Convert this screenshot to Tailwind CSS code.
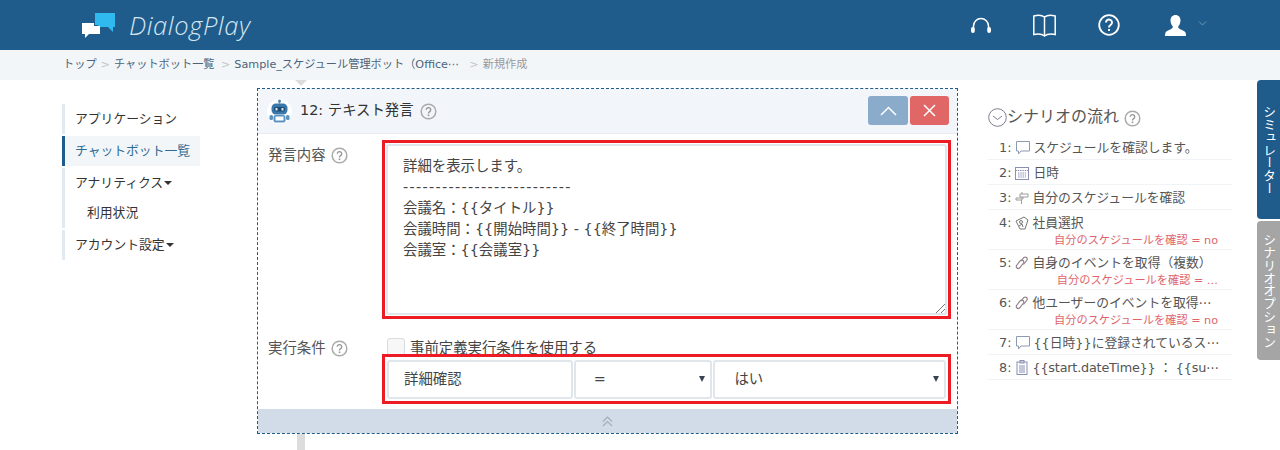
<!DOCTYPE html>
<html lang="ja">
<head>
<meta charset="utf-8">
<title>DialogPlay</title>
<script src="https://cdn.jsdelivr.net/npm/@tailwindcss/browser@4"></script>
</head>
<body class="h-[450px] overflow-hidden bg-white text-[14.4px] text-[#444] font-['DejaVu_Sans','Noto_Sans_CJK_JP',sans-serif]">

<!-- header -->
<header class="h-[50px] bg-[#1f5c8b] flex items-center text-white">
  <svg class="ml-[82px] mt-[2px]" width="33" height="26" viewBox="0 0 33 26">
    <path d="M13 0h20v14h-2v5l-5-5H16v-2h-3z" fill="#2fb9ee"/>
    <path d="M0 10h12v3h6v8H7l-4 4v-4H0z" fill="#fff"/>
  </svg>
  <span class="ml-[14px] text-[25.500px] italic font-light tracking-[0.6px] text-[#d5e6f2] font-['Open_Sans',sans-serif]">DialogPlay</span>
  <div class="ml-auto flex items-center">
    <svg class="mr-[42px]" width="20" height="16" viewBox="0 0 20 16" fill="none" stroke="#fff">
      <path d="M2.500 11V9a7.500 7.500 0 0 1 15 0v2" stroke-width="1.500"/>
      <rect x="0" y="10" width="3.800" height="6" rx="1.900" fill="#fff" stroke="none"/>
      <rect x="16.200" y="10" width="3.800" height="6" rx="1.900" fill="#fff" stroke="none"/>
    </svg>
    <svg class="mr-[42px]" width="23" height="23" viewBox="0 0 23 23" fill="none" stroke="#fff" stroke-width="1.500">
      <path d="M.8 2c4-1 8-1 10.700 1 2.700-2 6.700-2 10.700-1v18.500c-4-.8-8-.8-10.700 1.500-2.700-2.300-6.700-2.300-10.700-1.500z"/>
      <path d="M11.500 3v19"/>
    </svg>
    <svg class="mr-[45px]" width="22" height="22" viewBox="0 0 22 22" fill="none">
      <circle cx="11" cy="11" r="9.800" stroke="#fff" stroke-width="1.800"/>
      <path d="M8 8.500a3 3 0 1 1 4.600 2.500c-1 .7-1.600 1.200-1.600 2.500" stroke="#fff" stroke-width="2"/>
      <rect x="10" y="15" width="2" height="2" fill="#fff"/>
    </svg>
    <svg class="mr-[12px]" width="21" height="21" viewBox="0 0 21 21" fill="#fff">
      <path d="M10.500 0c3 0 5 2.300 5 5.500 0 2.500-1 4.500-2.200 5.800-.4 1.200.2 2.200 2 3 2.200 1 4.400 2 5.200 3.200.3.800.5 2 .5 3.500H0c0-1.500.2-2.700.5-3.500.8-1.200 3-2.200 5.200-3.200 1.800-.8 2.400-1.800 2-3C6.500 10 5.500 8 5.500 5.500c0-3.200 2-5.500 5-5.500z"/>
    </svg>
    <svg class="mr-[73px] mb-[4px]" width="9" height="5" viewBox="0 0 9 5" fill="none" stroke="#6f95b3"><path d="M1 .5l3.500 3.500L8 .5"/></svg>
  </div>
</header>

<!-- breadcrumb -->
<nav class="h-[30px] bg-[#f3f6f9] flex items-center pl-[63px] pt-[1px] text-[11.200px] text-[#4b6478] whitespace-nowrap">
  <span>トップ</span>
  <span class="mx-[4px] text-[#c5c5c5]">&gt;</span>
  <span class="w-[103px]">チャットボット一覧</span>
  <span class="mx-[4px] text-[#c5c5c5]">&gt;</span>
  <span class="w-[231px]">Sample_スケジュール管理ボット（Office⋯</span>
  <span class="mx-[4px] text-[#c5c5c5]">&gt;</span>
  <span class="text-[#999]">新規作成</span>
</nav>

<div class="flex items-start">
  <!-- side menu -->
  <aside class="w-[257px] shrink-0 pl-[62px] pt-[24px]">
    <ul class="w-[138px] flex flex-col gap-[2px] text-[12.800px] text-[#333]">
      <li class="h-[30px] border-l-[3px] border-[#e1e9f2] pl-[10px] leading-[29px]">アプリケーション</li>
      <li class="h-[30px] border-l-[3px] border-[#1f5c8b] bg-[#f3f6f9] pl-[10px] leading-[29px] text-[#2d6a94]">チャットボット一覧</li>
      <li class="h-[60px] border-l-[3px] border-[#e1e9f2] pl-[10px] leading-[29px]">
        <div class="flex items-center">アナリティクス<span class="ml-[1px] mt-[1px] border-x-[4px] border-t-[4px] border-x-transparent border-t-[#333]"></span></div>
        <div class="pl-[12px] leading-[31px]">利用状況</div>
      </li>
      <li class="h-[30px] border-l-[3px] border-[#e1e9f2] pl-[10px] leading-[29px]">
        <div class="flex items-center">アカウント設定<span class="ml-[1px] mt-[1px] border-x-[4px] border-t-[4px] border-x-transparent border-t-[#333]"></span></div>
      </li>
    </ul>
  </aside>

  <!-- editor card -->
  <main class="w-[701px] shrink-0 relative mt-[8px]">
    <span class="absolute -top-[8px] left-[38px] border-x-[6px] border-t-[6px] border-x-transparent border-t-[#dcdcdc]"></span>
    <section class="h-[346px] border border-dashed border-[#1f5c8b] flex flex-col">
      <div class="h-[45px] shrink-0 bg-[#f2f5f9] border-b border-[#e8ebef] flex items-center pl-[9px] pr-[8px]">
        <svg width="25" height="25" viewBox="0 0 25 25">
          <circle cx="12.500" cy="12.500" r="12.500" fill="#fff"/>
          <path d="M11.800 1.500h1.400v3h-1.400z" fill="#4d86b5"/>
          <circle cx="12.500" cy="2" r="1.500" fill="#4d86b5"/>
          <rect x="4.500" y="4.500" width="16" height="11" rx="4.500" fill="#3a78ac"/>
          <rect x="7" y="8" width="11" height="4.500" rx="2" fill="#1c4a70"/>
          <rect x="8.500" y="9" width="2" height="2.500" fill="#dceaf5"/>
          <rect x="14.500" y="9" width="2" height="2.500" fill="#dceaf5"/>
          <rect x="6.500" y="16" width="12" height="7.500" rx="2" fill="#5a93c2"/>
          <rect x="8.500" y="17.500" width="8" height="4" fill="#fff"/>
          <rect x="2.500" y="16" width="3.500" height="5" rx="1.500" fill="#5a93c2"/>
          <rect x="19" y="16" width="3.500" height="5" rx="1.500" fill="#5a93c2"/>
        </svg>
        <span class="ml-[8px] text-[#333]">12: テキスト発言</span>
        <svg class="ml-[6px]" width="17" height="17" viewBox="0 0 17 17" fill="none"><use href="#help"/></svg>
        <button class="ml-auto mb-[1px] w-[40px] h-[29px] rounded-[3px] bg-[#8babcb] flex items-center justify-center">
          <svg width="17" height="10" viewBox="0 0 17 10" fill="none" stroke="#fff" stroke-width="1.500"><path d="M1 9l7.500-7.500L16 9"/></svg>
        </button>
        <button class="ml-[2px] mb-[1px] w-[39px] h-[29px] rounded-[3px] bg-[#e16666] flex items-center justify-center">
          <svg width="13" height="13" viewBox="0 0 13 13" fill="none" stroke="#fff" stroke-width="1.500"><path d="M1 1l11 11M12 1L1 12"/></svg>
        </button>
      </div>

      <div class="flex-1 flex flex-col">
        <div class="flex pt-[6px]">
          <div class="w-[124px] shrink-0 pl-[10px] pt-[1px] flex items-center h-[30px] text-[#555]">発言内容
            <svg class="ml-[5px]" width="17" height="17" viewBox="0 0 17 17" fill="none"><use href="#help"/></svg>
          </div>
          <div class="w-[569px] h-[179px] border-[3px] border-[#ed1c24] p-[1px] relative">
            <div class="h-full border-2 border-[#dfe6ec] rounded-[3px] pl-[15px] pt-[10px] leading-[21px]">
              <p>詳細を表示します。</p>
              <p class="tracking-[1.300px]">--------------------------</p>
              <p>会議名：{{タイトル}}</p>
              <p>会議時間：{{開始時間}} - {{終了時間}}</p>
              <p>会議室：{{会議室}}</p>
            </div>
            <svg class="absolute right-[3px] bottom-[3px]" width="9" height="9" viewBox="0 0 9 9" stroke="#777" fill="none"><path d="M0 9l9-9M5 9l4-4"/></svg>
          </div>
        </div>

        <div class="flex mt-[19px]">
          <div class="w-[124px] shrink-0 pl-[10px] pt-[1px] flex items-center h-[20px] text-[#555]">実行条件
            <svg class="ml-[5px]" width="17" height="17" viewBox="0 0 17 17" fill="none"><use href="#help"/></svg>
          </div>
          <div class="w-[569px]">
            <label class="h-[16px] flex items-start pl-[5px]">
              <span class="w-[18px] h-[18px] shrink-0 border border-[#d8dce1] rounded-[3px] bg-[#f7f7f7]"></span>
              <span class="ml-[5px] leading-[21px]">事前定義実行条件を使用する</span>
            </label>
            <div class="relative h-[50px] border-[3px] border-[#ed1c24] pl-[2px] pr-[2px] pt-[3px] flex gap-[1px] bg-white">
              <div class="w-[186px] h-[39px] border-2 border-[#dfe6ec] rounded-[3px] pl-[15px] leading-[34px]">詳細確認</div>
              <div class="w-[139px] h-[39px] border-2 border-[#dfe6ec] rounded-[3px] pl-[18px] leading-[34px] relative">=<span class="absolute right-[5px] top-[14px] border-x-[3.500px] border-t-[6px] border-x-transparent border-t-[#3a4450]"></span></div>
              <div class="w-[233px] h-[39px] border-2 border-[#dfe6ec] rounded-[3px] pl-[19px] leading-[34px] relative">はい<span class="absolute right-[5px] top-[14px] border-x-[3.500px] border-t-[6px] border-x-transparent border-t-[#3a4450]"></span></div>
            </div>
          </div>
        </div>
      </div>

      <div class="h-[24px] shrink-0 bg-[#d1dce8] flex items-center justify-center">
        <svg width="11" height="11" viewBox="0 0 11 11" fill="none" stroke="#a3adb8" stroke-width="1.200"><path d="M1 5.500l4.500-4.500L10 5.500M1 10l4.500-4.500L10 10"/></svg>
      </div>
    </section>
    <div class="ml-[40px] w-[8px] h-[20px] bg-[#dcdcdc]"></div>
  </main>

  <!-- scenario flow -->
  <aside class="w-[244px] shrink-0 ml-[30px] pt-[26px]">
    <h2 class="flex items-center h-[22px] text-[16px] text-[#555] font-normal">
      <svg width="19" height="19" viewBox="0 0 19 19" fill="none" stroke="#7d7d92"><circle cx="9.500" cy="9.500" r="8.800"/><path d="M5 8l4.500 3.500L14 8"/></svg>
      シナリオの流れ
      <svg class="ml-[5px] mt-[2px]" width="17" height="17" viewBox="0 0 17 17" fill="none"><use href="#help"/></svg>
    </h2>
    <ol class="mt-[7px] text-[12.800px] text-[#555] whitespace-nowrap">
      <li class="h-[25px] border-b border-[#f1f3f6] flex items-center pl-[11px] pt-[1px]">1:<svg class="ml-[4px] mr-[2px] shrink-0" width="16" height="15" viewBox="0 0 16 15"><use href="#bubble"/></svg><span>スケジュールを確認します。</span></li>
      <li class="h-[25px] border-b border-[#f1f3f6] flex items-center pl-[11px] pt-[1px]">2:<svg class="mx-[4px] shrink-0" width="14" height="14" viewBox="0 0 14 14" fill="none" stroke="#8a8fb5"><rect x=".5" y="1.500" width="13" height="12"/><path d="M.5 4.500h13M3 7h8M3 9h8M3 11h8" stroke-dasharray="1.500 .8"/></svg><span>日時</span></li>
      <li class="h-[25px] border-b border-[#f1f3f6] flex items-center pl-[11px] pt-[1px]">3:<svg class="ml-[4px] mr-[3px] shrink-0" width="14" height="14" viewBox="0 0 14 14" fill="none" stroke="#9a9a9a"><path d="M5 3h8v3H5zM1 7h8M1 7v2h6V7M7 3V1M6.500 9v4"/></svg><span>自分のスケジュールを確認</span></li>
      <li class="h-[40px] border-b border-[#f1f3f6] pl-[11px] pt-[3px]">
        <div class="flex items-center h-[20px]">4:<svg class="ml-[4px] mr-[3px] shrink-0" width="14" height="14" viewBox="0 0 14 14" fill="none" stroke="#777"><path d="M1 5l8-4 4 3-3 9-5 0z"/><circle cx="6" cy="6" r="1.500"/><path d="M4 10l3-2 1 3"/></svg><span>社員選択</span></div>
        <div class="text-right pr-[14px] text-[11.200px] leading-[16px] text-[#e0646a]">自分のスケジュールを確認 = no</div>
      </li>
      <li class="h-[40px] border-b border-[#f1f3f6] pl-[11px] pt-[3px]">
        <div class="flex items-center h-[20px]">5:<svg class="ml-[4px] mr-[3px] shrink-0" width="14" height="14" viewBox="0 0 14 14"><use href="#chain"/></svg><span>自身のイベントを取得（複数）</span></div>
        <div class="text-right pr-[14px] text-[11.200px] leading-[16px] text-[#e0646a]">自分のスケジュールを確認 = …</div>
      </li>
      <li class="h-[40px] border-b border-[#f1f3f6] pl-[11px] pt-[3px]">
        <div class="flex items-center h-[20px]">6:<svg class="ml-[4px] mr-[3px] shrink-0" width="14" height="14" viewBox="0 0 14 14"><use href="#chain"/></svg><span>他ユーザーのイベントを取得⋯</span></div>
        <div class="text-right pr-[14px] text-[11.200px] leading-[16px] text-[#e0646a]">自分のスケジュールを確認 = no</div>
      </li>
      <li class="h-[25px] border-b border-[#f1f3f6] flex items-center pl-[11px] pt-[1px]">7:<svg class="ml-[4px] mr-[2px] shrink-0" width="16" height="15" viewBox="0 0 16 15"><use href="#bubble"/></svg><span>{{日時}}に登録されているス⋯</span></li>
      <li class="h-[25px] border-b border-[#f1f3f6] flex items-center pl-[11px] pt-[1px]">8:<svg class="ml-[4px] mr-[3px] shrink-0" width="14" height="15" viewBox="0 0 14 15" fill="none" stroke="#8a8fb5"><rect x="2" y="2" width="10" height="12.500"/><rect x="5" y=".5" width="4" height="2.500" fill="#ccc"/><path d="M4 6h6M4 8h6M4 10h6M4 12h6"/></svg><span class="tracking-[-0.2px]">{{start.dateTime}} ： {{su⋯</span></li>
    </ol>
  </aside>

  <!-- side tabs -->
  <div class="ml-[25px] w-[23px] shrink-0 flex flex-col gap-[2px] text-[12.800px] text-white">
    <div class="h-[139px] rounded-l-[4px] bg-[#1f5c8b] flex justify-center [writing-mode:vertical-rl] items-center">シミュレーター</div>
    <div class="h-[139px] rounded-l-[4px] bg-[#a5a5a5] flex justify-center [writing-mode:vertical-rl] items-center">シナリオオプション</div>
  </div>
</div>

<svg class="hidden" width="0" height="0">
  <defs>
    <g id="help">
      <circle cx="8.500" cy="8.500" r="7.300" fill="none" stroke="#aaa" stroke-width="1.500"/>
      <path d="M6.300 6.800a2.200 2.200 0 1 1 3.400 1.900c-.8.500-1.200.9-1.200 1.800" fill="none" stroke="#999" stroke-width="1.400"/>
      <rect x="7.700" y="11.500" width="1.600" height="1.600" fill="#999"/>
    </g>
    <path id="bubble" d="M1.500 1.500h13v9.500H6l-2.500 3v-3h-2z" fill="none" stroke="#8e9ab0"/>
    <g id="chain" fill="none" stroke="#8a7a80" stroke-width="1.100">
      <path d="M1.500 9.500l4-5a2 2 0 0 1 3 2.500l-4 5a2 2 0 0 1-3-2.500z"/>
      <path d="M6 5l3-3.500a2 2 0 0 1 3 2.500l-3.500 4.500"/>
    </g>
  </defs>
</svg>
</body>
</html>
